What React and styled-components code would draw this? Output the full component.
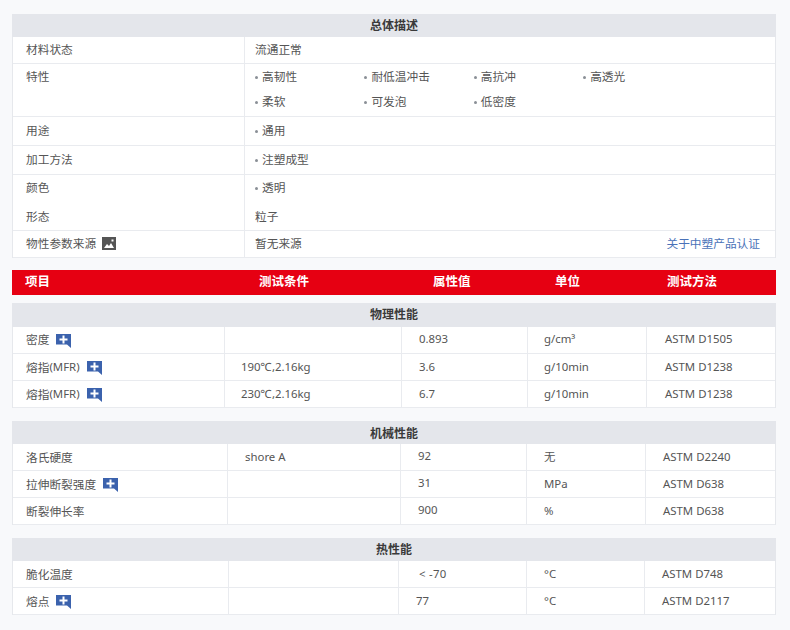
import React from 'react';
import styled, { createGlobalStyle } from 'styled-components';

const Global = createGlobalStyle`
  *, *::before, *::after { box-sizing: border-box; }
  html, body { margin: 0; padding: 0; background: #f8f9fb; }
  body { font-family: "Noto Sans", "Noto Sans CJK SC", sans-serif; font-size: 11.7px; color: #555; }
`;
const Page = styled.div`
  width: 764px; margin-left: 12px; padding-top: 14px; height: 630px; overflow: hidden;
  display: flex; flex-direction: column;
`;
const Panel = styled.section`
  background: #fff; border-left: 1px solid #e6e8ec; border-right: 1px solid #e6e8ec;
  margin-top: ${p => p.$mt || 0}px;
`;
const Head = styled.div`
  height: ${p => p.$h || 23}px; line-height: ${p => p.$lh || p.$h || 23}px; background: #e4e6eb; text-align: center;
  font-size: 12px; font-weight: 700; color: #3a3a3a; margin: 0 -1px;
`;
const Row = styled.div`
  --lift: ${p => p.$pad ?? 2}px;
  display: grid; grid-template-columns: ${p => p.$cols};
  height: ${p => p.$h}px;
  border-bottom: ${p => p.$noline ? 0 : '1px solid #e9ebef'};
`;
const Cell = styled.div`
  display: flex; align-items: ${p => p.$top ? 'flex-start' : 'center'};
  padding-left: ${p => p.$pl ?? 13}px;
  padding-top: ${p => p.$top ? 3 : 0}px;
  padding-bottom: var(--lift);
  border-left: ${p => p.$first ? 0 : '1px solid #e9ebef'};
  font-size: ${p => p.$num ? '11.4px' : 'inherit'};
  white-space: nowrap;
`;
const Latin = styled.span`font-size: 11.4px;`;
const Bul = styled.span`
  &::before { content: ""; display: inline-block; width: 3px; height: 3px; border-radius: 50%; background: #8a8f96; margin-right: 4px; vertical-align: 2px; }
`;
const Tags = styled.div`
  display: grid; grid-template-columns: repeat(4, 109.4px); padding: 0 0 2px 10px;
`;
const Tag = styled(Bul)`height: 25px; line-height: 25px;`;
const LinkText = styled.a`
  margin-left: auto; margin-right: 15px; color: #4a72b8;
`;
const Red = styled.div`
  display: grid; grid-template-columns: 233px 174px 122px 112px 123px; height: 25px; line-height: 23px;
  background: #e60012; color: #fff; font-weight: 700; font-size: 12.5px; margin-top: 12px;
`;
const RedCell = styled.div`padding-left: ${p => p.$pl}px;`;
const Raised = styled.span`padding-bottom: 2px;`;
const Indented = styled.span`margin-left: 3px; letter-spacing: 0.3px;`;
const IconSvg = styled.svg`flex: none; margin-left: ${p => p.$ml}px; margin-top: ${p => p.$mt || 0}px;`;
const Plus = ({ mt = 4 }) => (
  <IconSvg $ml={7} $mt={mt} width="15" height="14" viewBox="0 0 15 14">
    <path d="M0 0H15V14L11 10.500H0z" fill="#3b62ad" />
    <path d="M6.500 1.500h2v3h3v2h-3v3h-2v-3h-3v-2h3z" fill="#fff" />
  </IconSvg>
);
const Pic = () => (
  <IconSvg $ml={6} $mt={3} width="14" height="13" viewBox="0 0 14 13">
    <rect width="14" height="13" fill="#555" />
    <path d="M2 11l3-4 2 2 2-3 3 5z" fill="#fff" />
    <rect x="9.500" y="2.500" width="2" height="2" fill="#fff" />
  </IconSvg>
);

const overview = '231px 531px';

function DataTable({ title, cols, pads, rows, mt, head, headLine, liftFirst }) {
  return (
    <Panel $mt={mt}>
      <Head $h={head} $lh={headLine}>{title}</Head>
      {rows.map((r, i) => (
        <Row key={i} $cols={cols} $h={27} $pad={liftFirst && i === 0 ? 4 : 2}>
          {r.map((c, j) => (
            <Cell key={j} $first={j === 0} $num={j > 0} $pl={pads[j]}>{c}</Cell>
          ))}
        </Row>
      ))}
    </Panel>
  );
}
const P = ({ t, latin, mt }) => <>{t}{latin && <Latin>{latin}</Latin>}<Plus mt={mt} /></>;

export default function App() {
  return (
    <Page>
      <Global />
      <Panel>
        <Head>总体描述</Head>
        <Row $cols={overview} $h={27} $pad={4}><Cell $first>材料状态</Cell><Cell $pl={10}>流通正常</Cell></Row>
        <Row $cols={overview} $h={53} $pad={0}>
          <Cell $first $top>特性</Cell>
          <Cell $pl={0}>
            <Tags>
              {['高韧性','耐低温冲击','高抗冲','高透光','柔软','可发泡','低密度'].map(t => <Tag key={t}>{t}</Tag>)}
            </Tags>
          </Cell>
        </Row>
        <Row $cols={overview} $h={29} $pad={4}><Cell $first>用途</Cell><Cell $pl={10}><Bul>通用</Bul></Cell></Row>
        <Row $cols={overview} $h={29} $pad={4}><Cell $first>加工方法</Cell><Cell $pl={10}><Bul>注塑成型</Bul></Cell></Row>
        <Row $cols={overview} $h={28} $noline $pad={6}><Cell $first>颜色</Cell><Cell $pl={10}><Bul>透明</Bul></Cell></Row>
        <Row $cols={overview} $h={28} $pad={3}><Cell $first>形态</Cell><Cell $pl={10}>粒子</Cell></Row>
        <Row $cols={overview} $h={27} $pad={4}>
          <Cell $first>物性参数来源<Pic /></Cell>
          <Cell $pl={10}>暂无来源<LinkText>关于中塑产品认证</LinkText></Cell>
        </Row>
      </Panel>
      <Red>
        <RedCell $pl={13}>项目</RedCell>
        <RedCell $pl={14}>测试条件</RedCell>
        <RedCell $pl={14}>属性值</RedCell>
        <RedCell $pl={14}>单位</RedCell>
        <RedCell $pl={14}>测试方法</RedCell>
      </Red>
      <DataTable title="物理性能" mt={8} head={24} liftFirst
        cols="211px 177px 126px 119px 129px" pads={[13, 16, 17, 16, 18]}
        rows={[
          [<P t="密度" mt={6} />, '', '0.893', 'g/cm³', 'ASTM D1505'],
          [<P t="熔指" latin="(MFR)" />, '190℃,2.16kg', '3.6', 'g/10min', 'ASTM D1238'],
          [<P t="熔指" latin="(MFR)" />, '230℃,2.16kg', '6.7', 'g/10min', 'ASTM D1238'],
        ]} />
      <DataTable title="机械性能" mt={13} headLine={25}
        cols="214px 173px 126px 119px 130px" pads={[13, 17, 17, 17, 17]}
        rows={[
          ['洛氏硬度', 'shore A', <Raised>92</Raised>, '无', 'ASTM D2240'],
          [<P t="拉伸断裂强度" />, '', <Raised>31</Raised>, 'MPa', 'ASTM D638'],
          ['断裂伸长率', '', <Raised>900</Raised>, '%', 'ASTM D638'],
        ]} />
      <DataTable title="热性能" mt={13}
        cols="215px 170px 128px 118px 131px" pads={[13, 18, 17, 17, 17]}
        rows={[
          ['脆化温度', '', <Indented>{'< -70'}</Indented>, '°C', 'ASTM D748'],
          [<P t="熔点" />, '', '77', '°C', 'ASTM D2117'],
        ]} />
    </Page>
  );
}
